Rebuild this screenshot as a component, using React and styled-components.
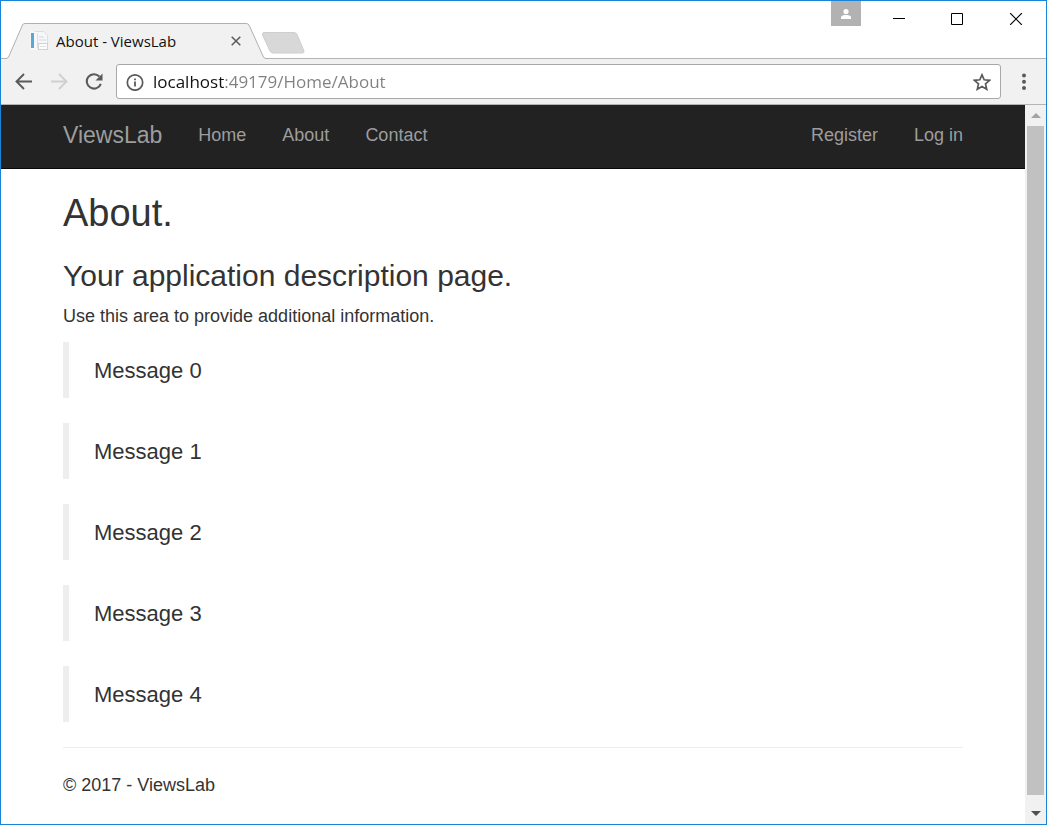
import React from "react";
import styled, { createGlobalStyle } from "styled-components";

const GlobalStyle = createGlobalStyle`
  *, *::before, *::after { box-sizing: border-box; }
  body { margin: 0; background: #fff; }
  button { margin: 0; padding: 0; border: 0; background: none; cursor: pointer; }
`;

const Window = styled.div`
  display: flex;
  flex-direction: column;
  min-height: 100vh;
  border: 1px solid #1883d7;
  background: #fff;
  color: #333;
  font-family: "Liberation Sans", Arial, sans-serif;
`;

const TabStrip = styled.header`
  display: flex;
  align-items: flex-end;
  height: 58px;
  padding-left: 4px;
  box-shadow: inset 0 -1px #b4b4b4;
`;

const Tab = styled.div`
  display: grid;
  width: 262px;
  height: 36px;
  > * { grid-area: 1 / 1; }
`;

const TabShape = styled.svg`
  display: block;
  width: 262px;
  height: 36px;
`;

const TabContent = styled.div`
  display: flex;
  align-items: center;
  gap: 7px;
  padding: 0 21px 0 24px;
`;

const TabTitle = styled.span`
  flex: 1;
  color: #111;
  font: 15px/20px "Open Sans", "Noto Sans", sans-serif;
  white-space: nowrap;
`;

const IconButton = styled.button`
  display: flex;
  align-items: center;
  justify-content: center;
  flex: none;
  width: ${(p) => p.$w}px;
  height: ${(p) => p.$h}px;
  color: ${(p) => p.$color || "#5a5a5a"};
`;

const NewTab = styled(IconButton)`
  margin: 0 0 5px -6px;
`;

const WindowControls = styled.div`
  display: flex;
  align-self: flex-start;
  margin-left: auto;
`;

const ProfileButton = styled(IconButton)`
  margin-right: 9px;
  background: #b2b2b2;
`;

const Toolbar = styled.div`
  display: flex;
  align-items: center;
  height: 46px;
  padding: 0 9px 0 5px;
  background: #f1f1f1;
  border-bottom: 1px solid #b4b4b4;
`;

const AddressBar = styled.form`
  display: flex;
  align-items: center;
  flex: 1;
  height: 35px;
  margin: 0 10px 0 5px;
  border: 1px solid #a8a8a8;
  border-radius: 3px;
  background: #fff;
`;

const AddressInput = styled.input`
  flex: 1;
  min-width: 0;
  height: 33px;
  padding: 0;
  border: 0;
  outline: 0;
  color: #808080;
  font: 17px/33px "Open Sans", "Noto Sans", sans-serif;
  background: linear-gradient(90deg, #111 71px, #808080 71px);
  background-clip: text;
  -webkit-text-fill-color: transparent;
`;

const Viewport = styled.div`
  display: flex;
  flex: 1;
`;

const Page = styled.div`
  flex: 1;
  min-width: 0;
`;

const Container = styled.div`
  max-width: 940px;
  margin: 0 auto;
  padding: 0 20px;
`;

const NavBar = styled.nav`
  background: #222;
  border-bottom: 1px solid #080808;
`;

const NavRow = styled(Container)`
  display: flex;
  align-items: center;
  gap: 36px;
  padding-top: 18px;
  padding-bottom: 21px;
`;

const NavLink = styled.a`
  color: #9d9d9d;
  font-size: 18px;
  line-height: 24px;
  text-decoration: none;
  white-space: nowrap;
`;

const Brand = styled(NavLink)`
  font-size: 23px;
`;

const NavRight = styled.div`
  display: flex;
  gap: 36px;
  margin-left: auto;
`;

const Title = styled.h2`
  margin: 24px 0;
  font-size: 38px;
  font-weight: 400;
  line-height: 41px;
`;

const Subtitle = styled.h3`
  margin: 24px 0 10px;
  font-size: 30px;
  font-weight: 400;
  line-height: 36px;
`;

const Text = styled.p`
  margin: 0 0 14px;
  font-size: 18px;
  line-height: 24px;
`;

const Message = styled.blockquote`
  margin: 0 0 25px;
  padding: 12px 25px 10px;
  border-left: 6px solid #eee;
  font-size: 22px;
  line-height: 34px;
`;

const Divider = styled.hr`
  margin: 25px 0;
  border: 0;
  border-top: 1px solid #eee;
`;

const ScrollBar = styled.div`
  display: flex;
  flex-direction: column;
  width: 21px;
  background: #f1f1f1;
`;

const Thumb = styled.div`
  flex: 1;
  margin: 0 2px 8px;
  background: #c1c1c1;
`;

const messages = [0, 1, 2, 3, 4];

export default function App() {
  return (
    <>
      <GlobalStyle />
      <Window>
        <TabStrip>
          <Tab>
            <TabShape viewBox="0 0 262 36" aria-hidden="true">
              <path d="M0 35.5H1Q3 35.5 4 33L17.5 2Q18 .5 20 .5H241Q243 .5 244 2L258 33Q259 35.5 261 35.5V36H0Z" fill="#f1f1f1" />
              <path d="M0 35.5H1Q3 35.5 4 33L17.5 2Q18 .5 20 .5H241Q243 .5 244 2L258 33Q259 35.5 261 35.5H262" fill="none" stroke="#b0b0b0" />
            </TabShape>
            <TabContent>
              <svg width="20" height="20" viewBox="0 0 20 20" aria-hidden="true">
                <path d="M1 .5H15L19 4.500V19H1z" fill="#f6f7f9" />
                <rect x="2" y="2" width="3" height="15" fill="#5ba6d8" />
                <path d="M8.500 2.500v15M5.500 .5h9.500l3.500 4V18" fill="none" stroke="#dadee6" />
                <path d="M10 6h5M10 9h7" stroke="#d5dae4" />
                <rect x="9.500" y="12.500" width="9" height="6" fill="#fcfcfd" stroke="#ccd1da" />
                <path d="M11 15.500h6" stroke="#dde1e8" />
              </svg>
              <TabTitle>About - ViewsLab</TabTitle>
              <IconButton $w={20} $h={20} aria-label="Close tab">
                <svg width="10" height="10" viewBox="0 0 10 10"><path d="M.7.7l8.600 8.600M9.300.7L.7 9.300" stroke="currentColor" strokeWidth="1.500" /></svg>
              </IconButton>
            </TabContent>
          </Tab>
          <NewTab $w={44} $h={22} aria-label="New tab">
            <svg width="44" height="22" viewBox="0 0 44 22"><path d="M3 .5H33Q35 .5 36 2.500L43 19Q43.500 21 41 21H12Q10 21 9 19L1.500 3Q.8.8 3 .5Z" fill="#d8d8d8" stroke="#cecece" /></svg>
          </NewTab>
          <WindowControls>
            <ProfileButton $w={30} $h={25} $color="#fff" aria-label="Profile">
              <svg width="12" height="12" viewBox="0 0 12 12"><circle cx="6" cy="3.500" r="2.600" fill="currentColor" /><path d="M1 11V9.500C1 7.500 4 7 6 7s5 .5 5 2.500V11z" fill="currentColor" /></svg>
            </ProfileButton>
            <IconButton $w={58} $h={36} $color="#000" aria-label="Minimize">
              <svg width="12" height="12" viewBox="0 0 12 12"><path d="M0 5.500H12" stroke="currentColor" /></svg>
            </IconButton>
            <IconButton $w={58} $h={36} $color="#000" aria-label="Maximize">
              <svg width="12" height="12" viewBox="0 0 12 12"><path d="M.5.5h11v11H.5z" fill="none" stroke="currentColor" /></svg>
            </IconButton>
            <IconButton $w={60} $h={36} $color="#000" aria-label="Close">
              <svg width="12" height="12" viewBox="0 0 12 12"><path d="M0 0l12 12M12 0L0 12" stroke="currentColor" strokeWidth="1.200" /></svg>
            </IconButton>
          </WindowControls>
        </TabStrip>

        <Toolbar>
          <IconButton $w={35} $h={35} aria-label="Back">
            <svg width="18" height="18" viewBox="0 0 18 18"><path d="M17 8.500H2M9 1L1.500 8.500 9 16" fill="none" stroke="currentColor" strokeWidth="1.900" /></svg>
          </IconButton>
          <IconButton $w={35} $h={35} $color="#d0d0d0" aria-label="Forward">
            <svg width="18" height="18" viewBox="0 0 18 18"><path d="M1 8.500H16M9 1L16.500 8.500 9 16" fill="none" stroke="currentColor" strokeWidth="1.900" /></svg>
          </IconButton>
          <IconButton $w={35} $h={35} aria-label="Reload">
            <svg width="18" height="18" viewBox="0 0 18 18"><path d="M15.800 10.800A7.200 7.200 0 1 1 14.300 3.500" fill="none" stroke="currentColor" strokeWidth="2.100" /><path d="M17.500.5V7.500H10.500z" fill="currentColor" /></svg>
          </IconButton>
          <AddressBar onSubmit={(e) => e.preventDefault()}>
            <IconButton type="button" $w={36} $h={33} aria-label="Site information">
              <svg width="18" height="18" viewBox="0 0 18 18"><circle cx="9" cy="9.500" r="7.700" fill="none" stroke="currentColor" strokeWidth="1.700" /><path d="M9 8.500v5M9 5.500v1.800" stroke="currentColor" strokeWidth="1.800" /></svg>
            </IconButton>
            <AddressInput aria-label="Address" defaultValue="localhost:49179/Home/About" spellCheck={false} />
            <IconButton type="button" $w={36} $h={33} aria-label="Bookmark this page">
              <svg width="18" height="18" viewBox="0 0 18 18"><path d="M9 1.800l2.200 5 5.400.5-4.100 3.600 1.200 5.300L9 13.400l-4.700 2.800 1.200-5.300-4.100-3.600 5.400-.5z" fill="none" stroke="currentColor" strokeWidth="1.700" /></svg>
            </IconButton>
          </AddressBar>
          <IconButton $w={26} $h={35} aria-label="Menu">
            <svg width="4" height="18" viewBox="0 0 4 18" fill="currentColor"><circle cx="2" cy="2.500" r="2" /><circle cx="2" cy="8.700" r="2" /><circle cx="2" cy="15" r="2" /></svg>
          </IconButton>
        </Toolbar>

        <Viewport>
          <Page>
            <NavBar>
              <NavRow>
                <Brand href="#">ViewsLab</Brand>
                <NavLink href="#home">Home</NavLink>
                <NavLink href="#about">About</NavLink>
                <NavLink href="#contact">Contact</NavLink>
                <NavRight>
                  <NavLink href="#register">Register</NavLink>
                  <NavLink href="#login">Log in</NavLink>
                </NavRight>
              </NavRow>
            </NavBar>
            <Container as="main">
              <Title>About.</Title>
              <Subtitle>Your application description page.</Subtitle>
              <Text>Use this area to provide additional information.</Text>
              {messages.map((n) => (
                <Message key={n}>Message {n}</Message>
              ))}
              <Divider />
              <footer>
                <Text>© 2017 - ViewsLab</Text>
              </footer>
            </Container>
          </Page>
          <ScrollBar>
            <IconButton $w={21} $h={21} $color="#a3a3a3" aria-label="Scroll up">
              <svg width="10" height="5" viewBox="0 0 10 5"><path d="M0 5L5 0l5 5z" fill="currentColor" /></svg>
            </IconButton>
            <Thumb />
            <IconButton $w={21} $h={21} $color="#505050" aria-label="Scroll down">
              <svg width="10" height="5" viewBox="0 0 10 5"><path d="M0 0h10L5 5z" fill="currentColor" /></svg>
            </IconButton>
          </ScrollBar>
        </Viewport>
      </Window>
    </>
  );
}
